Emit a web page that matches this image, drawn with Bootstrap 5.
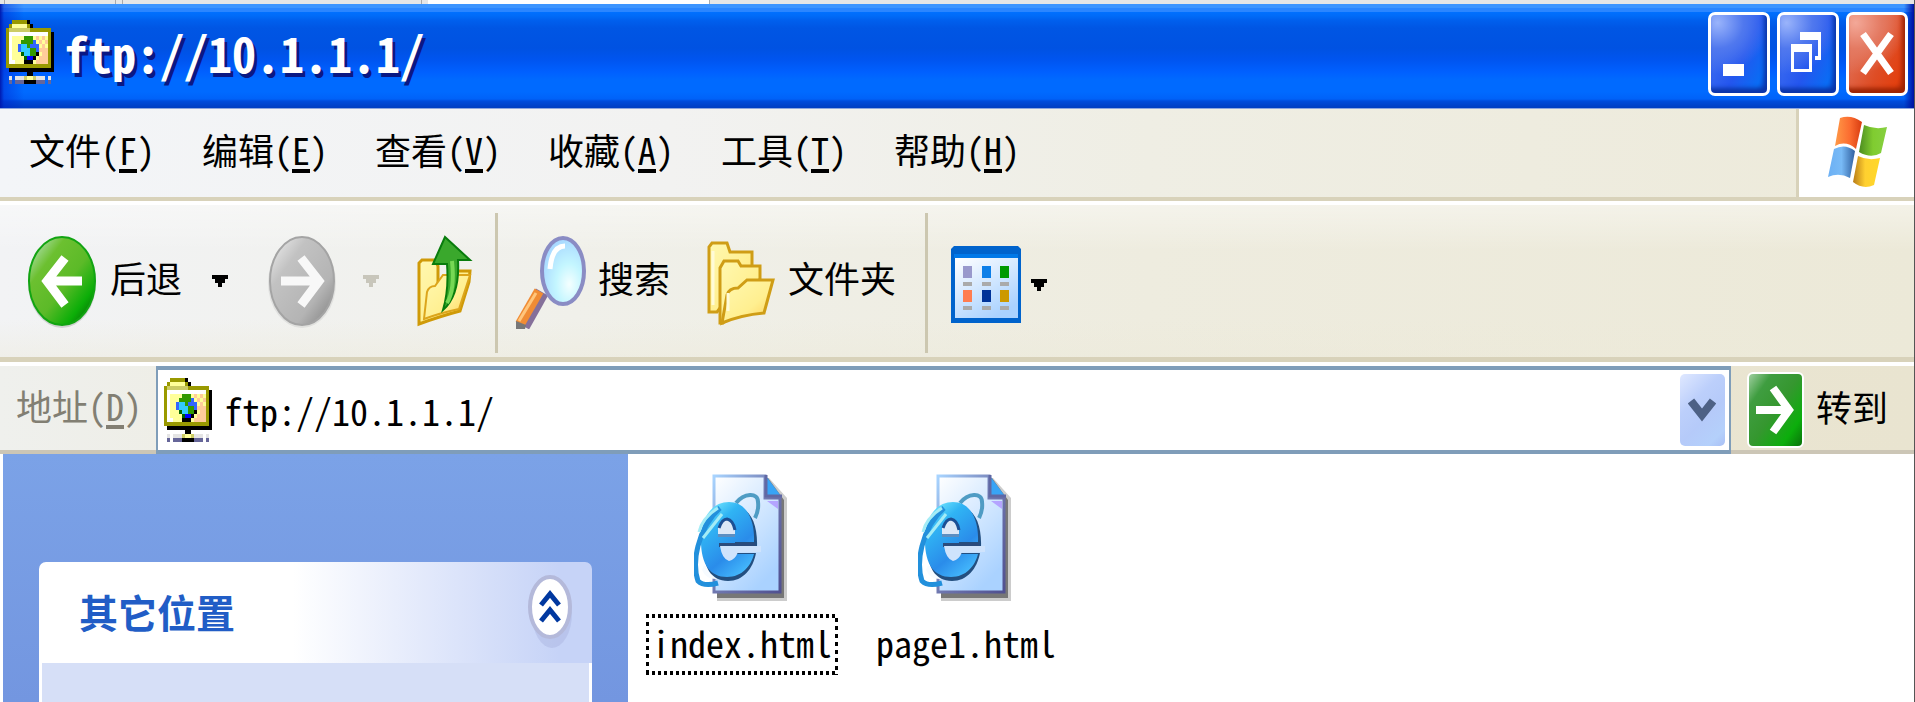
<!DOCTYPE html>
<html lang="zh-CN">
<head>
<meta charset="utf-8">
<meta name="viewport" content="width=device-width, initial-scale=1">
<title>ftp://10.1.1.1/</title>
<link href="https://cdn.jsdelivr.net/npm/bootstrap@5.3.0/dist/css/bootstrap.min.css" rel="stylesheet">
<style>
  :root { --tan: #d8d2ba; --field: #7f9db9; }
  body {
    font-family: "Noto Sans CJK SC", sans-serif;
    font-feature-settings: "hwid";
    font-size: 36px; line-height: 44px; color: #000; background: #fff;
    overflow: hidden;
  }
  button, input { font-feature-settings: inherit; }
  svg { display: block; flex: none; }
  .window { border-right: 1px solid #555; }
  .plain { background: none; border: 0; padding: 0; color: inherit; white-space: nowrap; }

  /* strip of browser tabs above the window */
  .tabstrip { height: 4px; background: #e6e6e6; }
  .tabstrip span { border-right: 1px solid #aaa; }
  .tab-a { width: 5px; } .tab-b { width: 111px; } .tab-c { width: 7px; }
  .tab-d { width: 299px; margin-right: 6px; } .tab-e { width: 282px; background: #fff; }

  /* title bar */
  .titlebar {
    height: 104px; padding: 0 6px;
    background:
      linear-gradient(90deg, #001ab0 0, #0019c866 4px, #0050ff00 24px, #0050ff00 calc(100% - 10px), #0010a0 100%),
      linear-gradient(#3d95ff 0, #3d95ff 4px, #2b86ff 4px, #2b86ff 8px, #0070ff 8px, #006bf8 12px, #0060ee 16px, #0056e4 24px, #0052e2 44px, #0055f0 56px, #0060ff 68px, #006aff 76px, #006aff 88px, #0062f8 95px, #004cdc 97px, #003fc4 103px);
  }
  .titlebar h1 { font-size: 48px; line-height: 56px; font-weight: 700; color: #fff; text-shadow: 3px 4px 0 #0a1883; padding-left: 10px; }
  .cap { width: 62px; height: 84px; border: 3px solid #fff; border-radius: 7px; padding: 0; display: flex; align-items: center; justify-content: center;
    background: radial-gradient(circle at 12% 10%, #9ab4fb 0, #5078ee 30%, #2a5eea00 60%), linear-gradient(115deg, #3c6cf0 20%, #2456ee 55%, #0a6cf4 85%, #0a48c8 100%);
    box-shadow: inset -3px -5px 4px #0b35a8; }
  .cap-close { background: radial-gradient(circle at 12% 10%, #f3a898 0, #e47a62 30%, #e0584000 60%), linear-gradient(115deg, #e06a4e 25%, #de4c24 60%, #e24010 85%, #b82c08 100%);
    box-shadow: inset -3px -5px 4px #9c2404; }

  /* menu and toolbars */
  .bar { border-bottom: 4px solid var(--tan); }
  .menubar { height: 93px; border-top: 1px solid #8fa6dc; background: linear-gradient(90deg, #f3f5f8 0, #f2f2f1 35%, #efeee4 60%, #edeada 100%); }
  .menubar ul { gap: 47px; padding: 18px 0 0 29px; }
  .key { border-bottom: 4px solid currentColor; display: inline-block; height: 46px; line-height: 44px; }
  .throbber { width: 118px; background: #fff; border-left: 3px solid var(--tan); }
  .toolbar { margin-top: 4px; height: 157px; border-bottom-width: 5px; padding-left: 24px;
    background: linear-gradient(#fff6, #fff0 30%, #ece9d800 75%, #ece9d866), linear-gradient(90deg, #f2f3f5 0, #f0f0ea 30%, #eeecdf 60%, #ece9d8 100%); }
  .sep { width: 3px; height: 140px; background: #ccc7b0; }
  .sep-views { margin: 0 17px 0 29px; }
  .addressbar { margin-top: 4px; height: 88px; background: linear-gradient(90deg, #eff0ed 0, #ece9d8 30%, #e9e4d0 100%); box-shadow: inset 0 -4px #ccc6b6; }
  .addressbar label { width: 156px; padding-left: 16px; color: #827f73; }
  .combo { border: 2px solid var(--field); border-width: 4px 2px; background: #fff; padding: 0 4px 0 6px; }
  .combo input { border: 0; outline: 0; padding: 0; margin-left: 12px; background: none; min-width: 0; line-height: 44px; }
  .drop { width: 45px; height: 72px; border: 0; padding: 0; border-radius: 5px; background: linear-gradient(135deg, #dfe8ff 0, #bccffb 35%, #b5caf9 60%, #b4d0fb 85%, #a9c0f5 100%); }
  .go { margin: 0 26px 0 16px; }
  .gobox { width: 57px; height: 76px; border: 2px solid #fff; border-radius: 6px; display: flex; align-items: center; justify-content: center;
    background: linear-gradient(125deg, #a0cfa0 0, #3f9d40 22%, #35972f 50%, #0cae0c 80%, #0a720a 100%); }

  /* task pane */
  .tasks { width: 625px; margin-left: 3px; padding: 108px 36px 0; background: linear-gradient(#7ba2e7, #7396e0); }
  .tasks header { height: 101px; padding: 0 20px 0 40px; border-radius: 7px 7px 0 0; background: linear-gradient(90deg, #fff 46%, #c6d3f7 94%); }
  .tasks h2 { font-size: 39px; line-height: 48px; font-weight: 700; color: #215dc6; }
  .tasks section { background: #d6dff7; border: solid #fff; border-width: 0 3px; }

  /* files */
  .files { padding: 16px 0 0 2px; }
  .file { width: 224px; color: #000; text-decoration: none; }
  .file svg { margin: 4px 0 12px; }
  .file span { padding: 6px 6px 11px; }
  .file:first-child span {
    background:
      repeating-linear-gradient(90deg, #000 0 3px, #0000 3px 6px) top / 100% 4px no-repeat,
      repeating-linear-gradient(90deg, #000 0 3px, #0000 3px 6px) bottom / 100% 4px no-repeat,
      repeating-linear-gradient(#000 0 4px, #0000 4px 8px) left / 3px 100% no-repeat,
      repeating-linear-gradient(#0000 0 4px, #000 4px 8px) right / 3px 100% no-repeat;
  }
</style>
</head>
<body>
<svg width="0" height="0" class="position-absolute" aria-hidden="true">
  <defs>
    <pattern id="dither" width="2" height="2" patternUnits="userSpaceOnUse"><rect width="2" height="2" fill="#ff9"/><rect width="1" height="1" fill="#fc9"/><rect x="1" y="1" width="1" height="1" fill="#fc9"/></pattern>
    <linearGradient id="green" x1="0" y1="0" x2="1" y2="1"><stop offset=".1" stop-color="#a8dca0"/><stop offset=".28" stop-color="#6cc030"/><stop offset=".55" stop-color="#5cba28"/><stop offset=".78" stop-color="#0cae08"/><stop offset="1" stop-color="#054d05"/></linearGradient>
    <linearGradient id="grey" x1="0" y1="0" x2="1" y2="1"><stop offset=".1" stop-color="#e2e2e2"/><stop offset=".3" stop-color="#c2c2c2"/><stop offset=".7" stop-color="#b4b4b4"/><stop offset="1" stop-color="#7c7c7c"/></linearGradient>
    <linearGradient id="yellow" x1="0" y1="0" x2="1" y2="1"><stop offset="0" stop-color="#fff8b0"/><stop offset=".6" stop-color="#ffef90"/><stop offset="1" stop-color="#ffcf58"/></linearGradient>
    <linearGradient id="paper" x1="0" y1="0" x2=".6" y2="1"><stop offset="0" stop-color="#fff"/><stop offset="1" stop-color="#aad2ff"/></linearGradient>
    <linearGradient id="edge" x1="0" y1="0" x2="1" y2="1"><stop offset="0" stop-color="#a8d4ff"/><stop offset=".5" stop-color="#7078b0"/><stop offset="1" stop-color="#505090"/></linearGradient>
    <linearGradient id="ie" x1=".1" y1="0" x2=".7" y2="1"><stop offset="0" stop-color="#80f0ff"/><stop offset=".3" stop-color="#30b4f4"/><stop offset=".7" stop-color="#2a8cea"/><stop offset="1" stop-color="#44b8fc"/></linearGradient>
    <symbol id="ftp" viewBox="0 0 16 16" preserveAspectRatio="none">
      <g shape-rendering="crispEdges">
        <path fill="#000" d="M7 0h1v1h1v1h1v1H7zM15 3h1v10H1v-1h14zM7 13h2v1H7zM6 14h4v2H6z"/>
        <path fill="#990" d="M2 0h5v1h1v1h7v10H0V2h1V1h1z"/>
        <path fill="#ff9" d="M2 1h5v1H2z"/><path fill="#cc6" d="M1 2h7v1H1z"/>
        <path fill="#fff" d="M1 3h13v8H1z"/><path fill="#ff9" d="M2 4h12v7H3v-1H2z"/>
        <path fill="url(#dither)" d="M10 4h4v7H7v-2h3z"/><path fill="#fc9" d="M12 7h2v4h-3V9h1z"/>
        <path fill="#000" d="M9 5h1v1h1v3h-1v1H9v1H6v-1h3z"/>
        <path fill="#36f" d="M5 5h1V4h3v1h1v1h1v2h-1v1H9v1H7V9H5V8H4V6h1z"/>
        <path fill="#3cf" d="M5 6h2v1h3v1H8v1H6V8H5z"/>
        <path fill="#390" d="M6 4h3v2H8v1H7V6H5V5h1zM8 7h2v2H8z"/><path fill="#060" d="M5 8h1v1h1v1H6V9H5z"/>
        <path fill="#00f" d="M7 9h2v1H7z"/>
        <path fill="#e4e4e4" d="M1 14h1v1H1zM3 14h3v1H3zM10 14h3v1h-3zM14 14h1v1h-1z"/>
        <path fill="#669" d="M1 15h1v1H1zM3 15h3v1H3zM10 15h3v1h-3zM14 15h1v1h-1z"/>
        <path fill="#cc6" d="M6 14h1v1H6zM9 14h1v1H9z"/><path fill="#ff9" d="M7 14h2v1H7z"/>
      </g>
    </symbol>
    <symbol id="page" viewBox="0 0 96 128" preserveAspectRatio="none">
      <path d="M23 4H75L93 24V127H23Z" fill="#0003"/><path d="M23 4H74L90 26V124H23Z" fill="#777"/>
      <path d="M20 2H71V24H86V118H20Z" fill="url(#paper)" stroke="url(#edge)" stroke-width="3"/>
      <path d="M72 2L87 22H72Z" fill="#38a4f6"/><path d="M72 1V22H88" fill="none" stroke="#6068a4" stroke-width="3"/><path d="M73 27h11v8z" fill="#b4a4ff"/>
      <path d="M42 29C50 19 64 18 64 28Q65 36 61 44" fill="none" stroke="#4f9cc4" stroke-width="4"/>
      <path d="M8 96Q12 106 24 105L18 97L10 91Z" fill="#f7fbff"/>
      <path d="M36 31C55 31 64 48 63 73H40V79H62C59 95 49 107 34 107C17 107 9 93 9 70C9 46 19 31 36 31Z" fill="#234f80"/>
      <path d="M35 28C52 28 61 45 60 68H41V80H60C57 92 48 103 33 103C16 103 7 90 7 67C7 43 18 28 35 28Z" fill="url(#ie)"/>
      <path d="M24 62V54Q27 45 33 45Q39 46 41 54V62Z" fill="#dce8f7"/><path d="M25 54Q28 45 33 45Q39 46 41 56" fill="none" stroke="#1c4f94" stroke-width="3"/><path d="M24 60h17v3H24z" fill="#5c8fc2"/>
      <path d="M25 69H61V73H25z" fill="#2b4b7c"/>
      <path d="M26 72H67V78H44Q41 86 35 87Q28 85 26 72" fill="#cfe3fc"/>
      <path d="M26 34Q10 48 4 72Q-1 92 4 107Q10 113 24 109" fill="none" stroke="#2290dc" stroke-width="5"/>
      <path d="M5 58Q8 44 24 34M9 64L28 40" fill="none" stroke="#a4ecf6" stroke-width="3"/>
    </symbol>
  </defs>
</svg>

<div class="window d-flex flex-column vh-100">
  <div class="tabstrip d-flex" aria-hidden="true"><span class="tab-a"></span><span class="tab-b"></span><span class="tab-c"></span><span class="tab-d"></span><span class="tab-e"></span></div>

  <div class="titlebar d-flex align-items-center">
    <svg class="mb-2" width="48" height="64" aria-hidden="true"><use href="#ftp"/></svg>
    <h1 class="mb-0 me-auto pb-2">ftp://10.1.1.1/</h1>
    <div class="d-flex pb-1" style="gap:7px">
      <button class="cap" type="button" aria-label="最小化"><svg width="56" height="78"><path d="M12 49h21v12H12z" fill="#fff"/></svg></button>
      <button class="cap" type="button" aria-label="还原"><svg width="56" height="78"><path d="M20 17h21v28h-6v-4h3V25H20zM11 29h21v28H11zm3 8v17h15V37z" fill="#fff" fill-rule="evenodd"/></svg></button>
      <button class="cap cap-close" type="button" aria-label="关闭"><svg width="56" height="78"><path d="M14 19L42 58M42 19L14 58" stroke="#fff" stroke-width="7"/></svg></button>
    </div>
  </div>

  <nav class="menubar bar d-flex" aria-label="菜单">
    <ul class="list-unstyled d-flex mb-0 me-auto">
      <li><button type="button" class="plain">文件(<span class="key">F</span>)</button></li>
      <li><button type="button" class="plain">编辑(<span class="key">E</span>)</button></li>
      <li><button type="button" class="plain">查看(<span class="key">V</span>)</button></li>
      <li><button type="button" class="plain">收藏(<span class="key">A</span>)</button></li>
      <li><button type="button" class="plain">工具(<span class="key">T</span>)</button></li>
      <li><button type="button" class="plain">帮助(<span class="key">H</span>)</button></li>
    </ul>
    <div class="throbber d-flex justify-content-center align-items-center">
      <svg width="60" height="76" viewBox="0 0 60 76" aria-hidden="true">
        <defs>
          <linearGradient id="fr"><stop offset="0" stop-color="#ff9a48"/><stop offset=".55" stop-color="#fb6c30"/><stop offset="1" stop-color="#d83c10"/></linearGradient>
          <linearGradient id="fg"><stop offset="0" stop-color="#4c8c20"/><stop offset=".5" stop-color="#80cc30"/><stop offset="1" stop-color="#86d040"/></linearGradient>
          <linearGradient id="fb"><stop offset="0" stop-color="#6cb0f4"/><stop offset=".5" stop-color="#78baf6"/><stop offset="1" stop-color="#3060a0"/></linearGradient>
          <linearGradient id="fy"><stop offset="0" stop-color="#b87c18"/><stop offset=".45" stop-color="#ffd030"/><stop offset="1" stop-color="#ffd828"/></linearGradient>
        </defs>
        <path d="M13 3Q24-1 35 7L29 34Q19 25 8 31Z" fill="url(#fr)"/><path d="M37 10Q48 15 60 12L54 38Q44 44 32 37Z" fill="url(#fg)"/>
        <path d="M7 34Q18 28 28 36L23 63Q12 57 1 62Z" fill="url(#fb)"/><path d="M31 41Q41 46 53 43L47 70Q36 75 26 67Z" fill="url(#fy)"/>
      </svg>
    </div>
  </nav>

  <div class="toolbar bar d-flex align-items-center" role="toolbar" aria-label="标准按钮">
    <button type="button" class="plain d-flex align-items-center">
      <svg width="86" height="96" viewBox="0 0 86 96" aria-hidden="true"><ellipse cx="38" cy="50" rx="34" ry="45" fill="#0002"/><ellipse cx="38" cy="48" rx="33" ry="44" fill="url(#green)" stroke="#12a412" stroke-width="2"/><path d="M58 48H23M41 25L23 48L41 72" fill="none" stroke="#fff" stroke-width="9"/></svg><span class="pb-2">后退</span>
    </button>
    <button type="button" class="plain ps-4 ms-1" aria-label="后退列表"><svg width="20" height="12" viewBox="-2 0 20 12"><path d="M0 0h16v4h-3v4h-3v4H6V8H3V4H0z"/></svg></button>
    <button type="button" class="plain ms-4 ps-2" aria-label="前进" disabled><svg width="77" height="96" viewBox="-5 0 77 96"><ellipse cx="35" cy="50" rx="34" ry="45" fill="#0001"/><ellipse cx="35" cy="48" rx="32" ry="44" fill="url(#grey)" stroke="#a4a4a4" stroke-width="2"/><path d="M14 48H50M34 25L52 48L34 72" fill="none" stroke="#f8f8f8" stroke-width="9"/></svg></button>
    <button type="button" class="plain ms-4" aria-label="前进列表" disabled><svg width="16" height="12"><path fill="#c8c6bb" d="M0 0h16v4h-3v4h-3v4H6V8H3V4H0z"/></svg></button>
    <button type="button" class="plain ms-4 ps-2" aria-label="向上"><svg width="84" height="96" viewBox="0 0 84 96">
      <path d="M8 91V30L11 27H24L27 33V51H40V38H59L58 49L49 78Q30 83 8 91Z" fill="url(#yellow)" stroke="#cf9a08" stroke-width="3"/>
      <path d="M13 86L16 59Q18 53 24 53L32 42H59L48 76Q29 80 13 86Z" fill="url(#yellow)" stroke="#dca51c" stroke-width="2"/>
      <path d="M34 4L59 27H47Q49 62 32 77Q38 57 36 31H22Z" fill="#3aa82c" stroke="#087c0c" stroke-width="2"/><path d="M41 28Q44 57 36 70" fill="none" stroke="#76d854" stroke-width="4"/></svg></button>
    <span class="sep mt-1"></span>
    <button type="button" class="plain d-flex align-items-center">
      <svg width="100" height="96" viewBox="0 0 100 96" aria-hidden="true">
        <defs><radialGradient id="lens" cx=".65" cy=".7" r=".7"><stop offset="0" stop-color="#f4ffff"/><stop offset=".45" stop-color="#c4f6ff"/><stop offset="1" stop-color="#a8d8ff"/></radialGradient></defs>
        <path d="M44 59L25 93" stroke="#85709a" stroke-width="14"/><path d="M41 58L22 91" stroke="#f08c34" stroke-width="10"/><path d="M38 60L21 88" stroke="#ffc67c" stroke-width="3"/><path d="M18 88l10 4-1 4h-9z" fill="#777"/>
        <ellipse cx="65" cy="38" rx="21" ry="33" fill="url(#lens)" stroke="#8a8cc4" stroke-width="4"/><path d="M52 36Q54 13 67 13" fill="none" stroke="#fff" stroke-width="5"/></svg><span class="pb-2">搜索</span>
    </button>
    <button type="button" class="plain d-flex align-items-center ms-4">
      <svg width="94" height="96" viewBox="1 0 94 96" aria-hidden="true"><g fill="url(#yellow)" stroke="#cf9d16" stroke-width="3">
        <path d="M16 79V14L19 10H34L37 19H59V33L24 79Z"/><path d="M27 90V35L31 28H45L48 33H67V46L30 90Z"/><path d="M29 90L34 62Q36 55 45 55L54 47H80L71 80Q48 82 29 90Z"/></g><path d="M35 60v18M20 18v54" stroke="#fffbd8" stroke-width="3"/></svg><span class="pb-2">文件夹</span>
    </button>
    <span class="sep sep-views mt-1"></span>
    <button type="button" class="plain d-flex align-items-center gap-2 pt-2" aria-label="查看方式">
      <svg width="78" height="78" viewBox="0 0 78 78"><path d="M9 0H73L76 3V77H6V3Z" fill="#0063cc"/><path d="M9 8h64v4H9z" fill="#0078e8"/><path d="M10 12H73V72H10Z" fill="url(#paper)"/>
      <path fill="#99c" d="M18 20h9v12h-9z"/><path fill="#0d7fe8" d="M37 20h9v12h-9z"/><path fill="#009a00" d="M55 20h9v12h-9z"/><path fill="#ff7d50" d="M18 44h9v12h-9z"/><path fill="#039" d="M37 44h9v12h-9z"/><path fill="#c90" d="M55 44h9v12h-9z"/><path fill="#aaa" d="M18 36h9v4h-9zM37 36h9v4h-9zM55 36h9v4h-9zM18 60h9v4h-9zM37 60h9v4h-9zM55 60h9v4h-9z"/></svg>
      <svg width="16" height="12"><path d="M0 0h16v4h-3v4h-3v4H6V8H3V4H0z"/></svg>
    </button>
  </div>

  <form class="addressbar d-flex" onsubmit="return false">
    <label for="address" class="align-self-center pb-2">地址(<span class="key">D</span>)</label>
    <div class="combo d-flex align-items-center flex-grow-1">
      <svg width="48" height="64" aria-hidden="true"><use href="#ftp"/></svg>
      <input id="address" class="flex-grow-1" type="text" value="ftp://10.1.1.1/">
      <button class="drop d-flex align-items-center justify-content-center" type="button" aria-label="地址列表"><svg width="28" height="24"><path d="M3 3L14 17L25 3" fill="none" stroke="#4d6185" stroke-width="8"/></svg></button>
    </div>
    <button class="go plain d-flex align-items-center gap-2" type="submit"><span class="gobox"><svg width="40" height="50"><path d="M1 25H36M18 3L34 25L18 47" fill="none" stroke="#fff" stroke-width="8"/></svg></span><span class="ps-1 pb-2">转到</span></button>
  </form>

  <main class="d-flex flex-grow-1">
    <aside class="tasks d-flex flex-column">
      <header class="d-flex align-items-center justify-content-between">
        <h2 class="m-0 pb-1">其它位置</h2>
        <button class="plain" type="button" aria-label="折叠"><svg width="44" height="76" viewBox="0 0 44 76"><ellipse cx="24" cy="38" rx="20" ry="35" fill="#a4afdc66"/><ellipse cx="22" cy="32" rx="20" ry="30" fill="#fff" stroke="#b4b9da" stroke-width="4"/><path d="M13 30L22 19L31 30M13 46L22 35L31 46" fill="none" stroke="#0038a0" stroke-width="5"/></svg></button>
      </header>
      <section class="flex-grow-1"></section>
    </aside>
    <div class="files d-flex align-items-start">
      <a class="file d-flex flex-column align-items-center" href="#"><svg width="96" height="128" aria-hidden="true"><use href="#page"/></svg><span>index.html</span></a>
      <a class="file d-flex flex-column align-items-center" href="#"><svg width="96" height="128" aria-hidden="true"><use href="#page"/></svg><span>page1.html</span></a>
    </div>
  </main>
</div>
<script src="https://cdn.jsdelivr.net/npm/bootstrap@5.3.0/dist/js/bootstrap.bundle.min.js"></script>
</body>
</html>
